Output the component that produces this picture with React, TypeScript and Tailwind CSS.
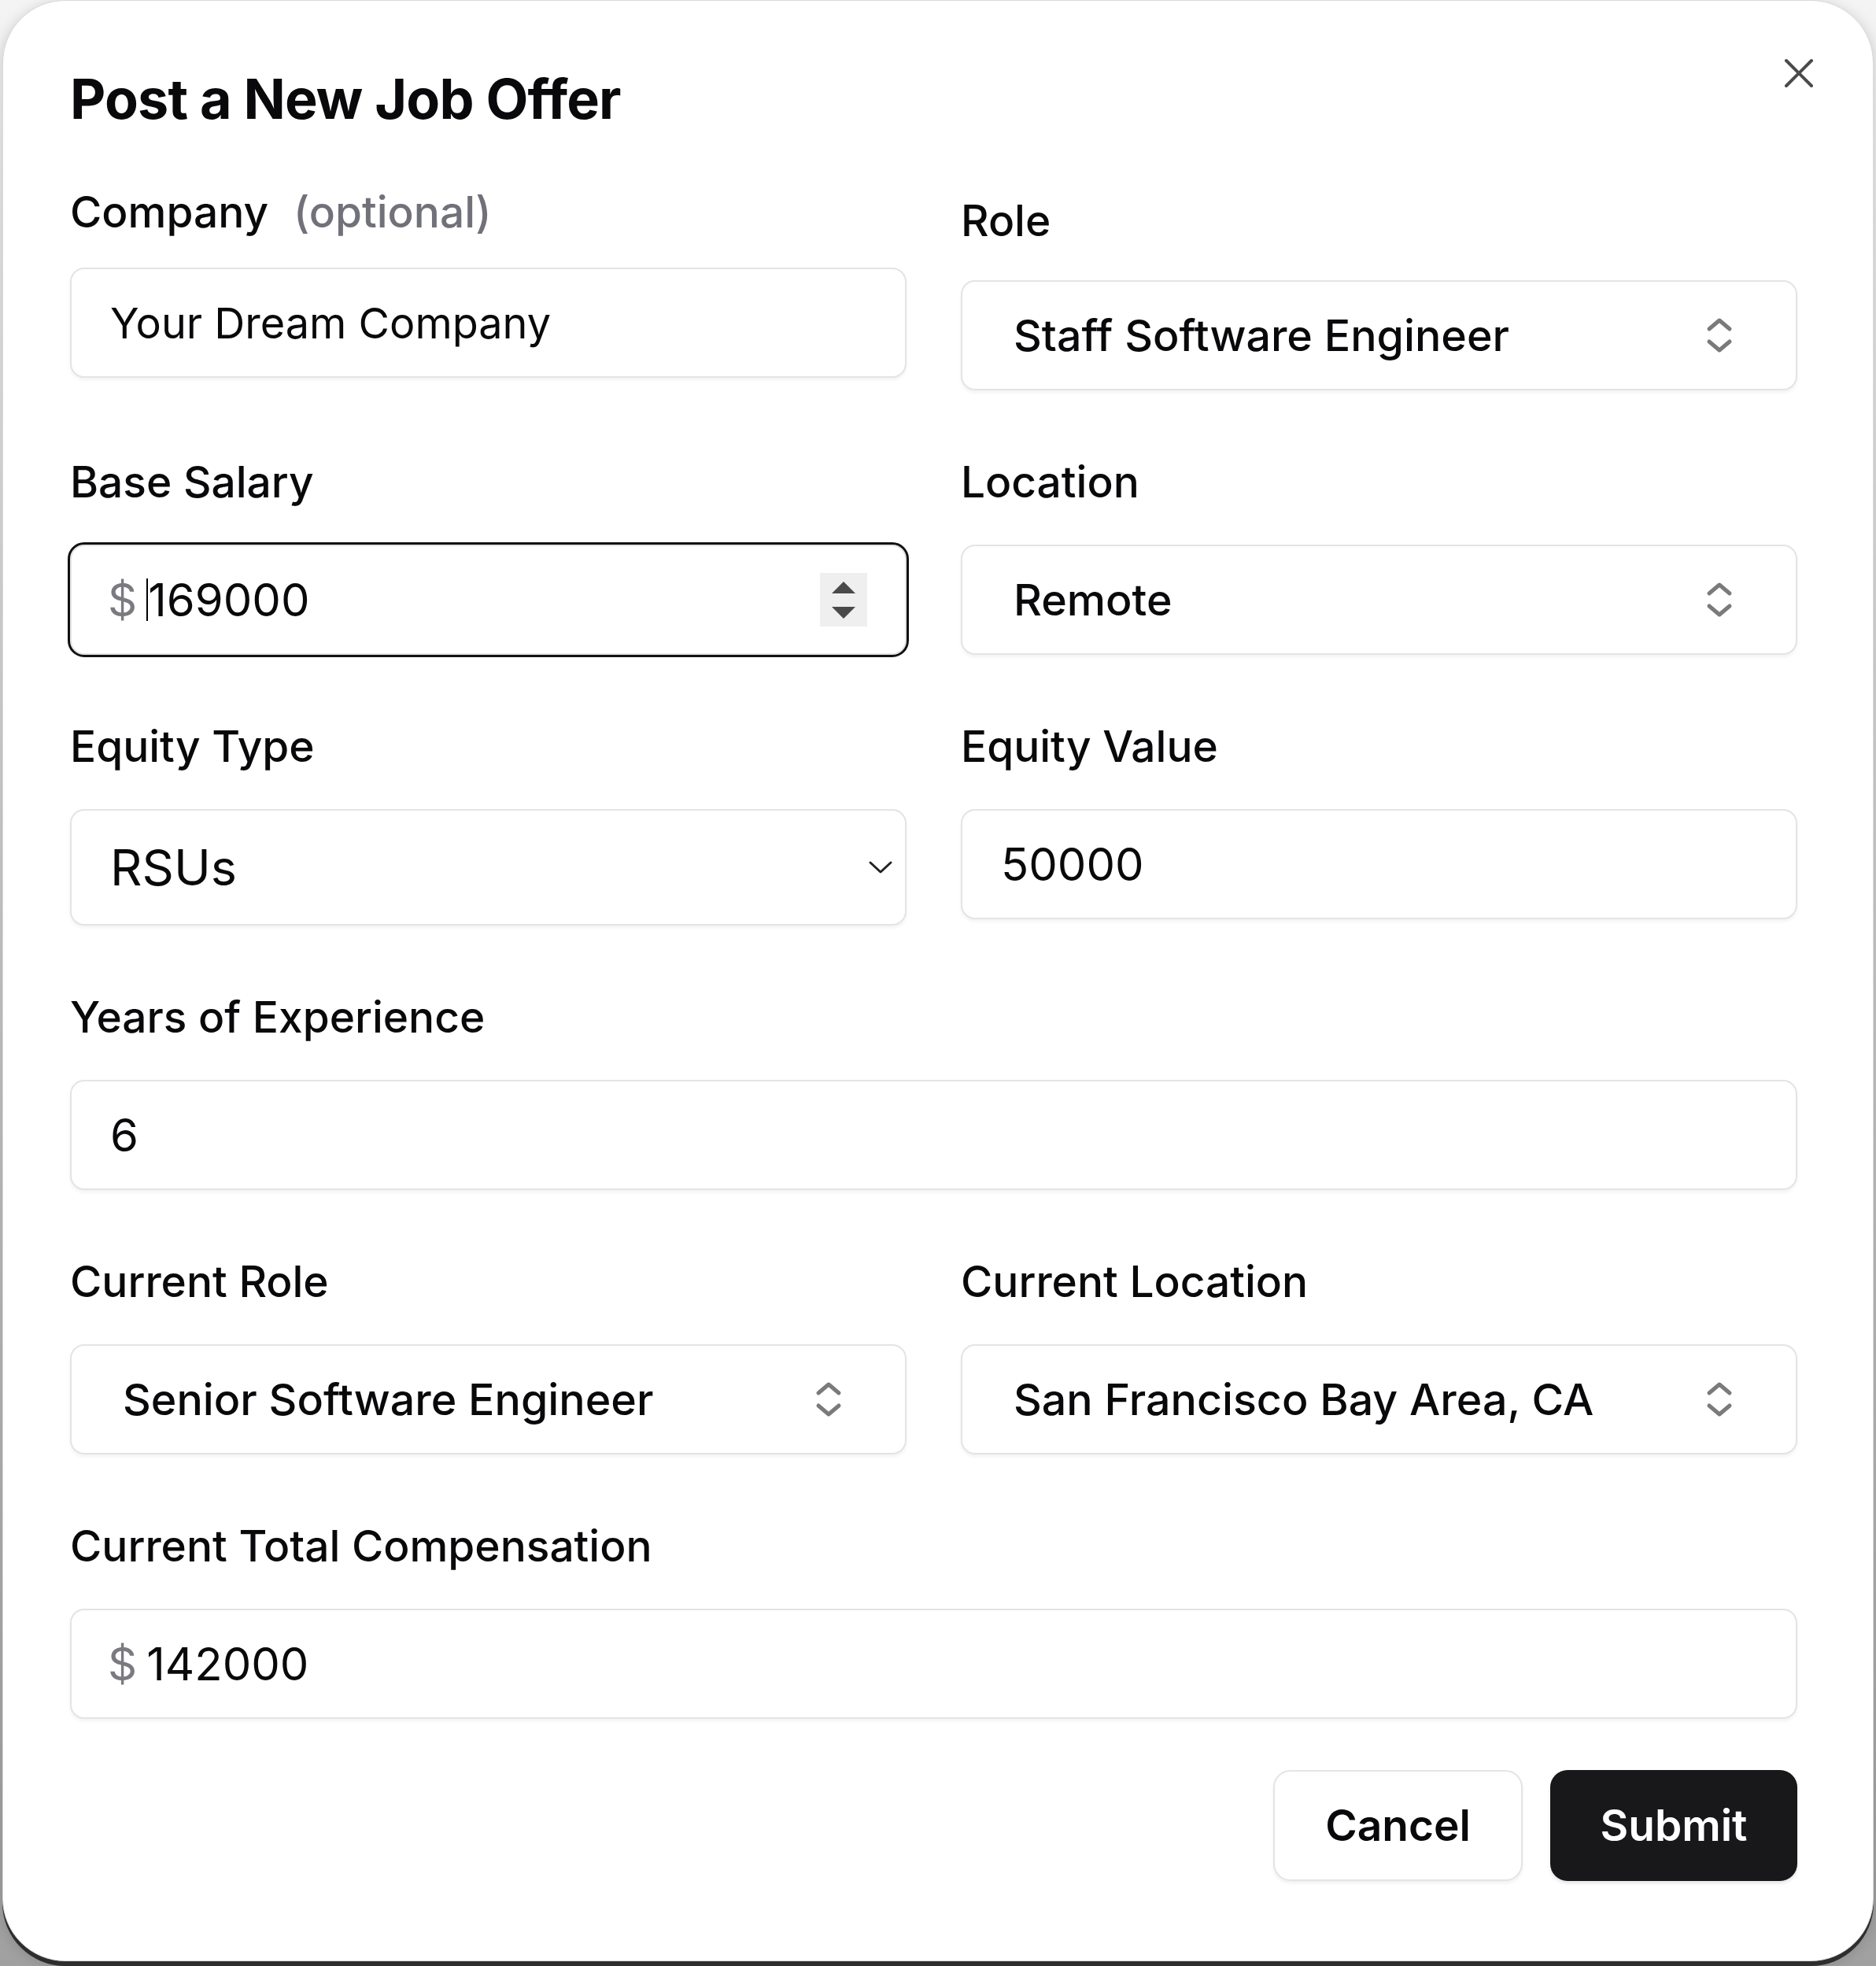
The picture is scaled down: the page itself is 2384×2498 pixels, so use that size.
import type { ReactNode } from "react";

// up/down carets used by the combobox-style pickers
const UpDown = () => (
  <svg width="36" height="54" viewBox="0 0 36 54" fill="none" stroke="#7a7a7a" strokeWidth="5" strokeLinecap="round" strokeLinejoin="round">
    <path d="M5 19 18 8 31 19" />
    <path d="M5 35 18 46 31 35" />
  </svg>
);

const Field = ({ label, className, gap, children }: { label: ReactNode; className?: string; gap: string; children: ReactNode }) => (
  <div className={`flex flex-col ${gap} ${className ?? ""}`}>
    <label className="text-[55px] leading-[64px] font-medium text-[#09090b]">{label}</label>
    {children}
  </div>
);

const box = "flex h-[140px] items-center rounded-[18px] border-2 border-[#e4e4e7] bg-white shadow-[0_3px_4px_rgba(0,0,0,0.05)]";

const Picker = ({ value }: { value: string }) => (
  <div className={`${box} justify-between pl-[65px] pr-[79px] text-[55.5px] font-medium text-[#09090b]`}>
    <span>{value}</span>
    <UpDown />
  </div>
);

const TextBox = ({ value, size = "text-[58px]" }: { value: string; size?: string }) => (
  <div className={`${box} pl-[49px] ${size} text-[#09090b]`}>{value}</div>
);

const Money = ({ value, focused }: { value: string; focused?: boolean }) => (
  <div className={`${box} pl-[46px] text-[58px] text-[#09090b] ${focused ? "border-[#111] outline-[3px] outline-[#111]" : ""}`}>
    <span className="mr-[12px] text-[#7a7a80]">$</span>
    {focused && <span className="h-[54px] w-[2px] bg-black" />}
    <span>{value}</span>
    {focused && (
      <div className="ml-auto mr-[48px] flex h-[68px] w-[60px] flex-col items-center justify-center gap-[17px] bg-[#efefef]">
        <svg width="30" height="15" viewBox="0 0 30 15"><path d="M15 0 30 15H0Z" fill="#4a4a4a" /></svg>
        <svg width="30" height="15" viewBox="0 0 30 15"><path d="M0 0h30L15 15Z" fill="#4a4a4a" /></svg>
      </div>
    )}
  </div>
);

export default function App() {
  return (
    <div className="h-[2498px] w-[2384px] bg-linear-to-b from-[#f4f4f4] to-[#a0a0a0] font-['Inter',sans-serif]">
      <div className="relative ml-[3px] h-[2492px] w-[2378px] rounded-[80px] border border-[#dadada] bg-white pl-[85px] pr-[96px] pt-[83px] shadow-[0_6px_0_#2e2e2e,0_4px_18px_rgba(0,0,0,0.18)]">
        <button className="absolute right-[74px] top-[72px]">
          <svg width="40" height="40" viewBox="0 0 40 40" stroke="#4b4b4b" strokeWidth="4" strokeLinecap="round">
            <path d="M4 4 36 36M36 4 4 36" />
          </svg>
        </button>

        <h2 className="mb-[69px] text-[70px] leading-[84px] font-bold tracking-[-0.012em] text-[#09090b]">Post a New Job Offer</h2>

        <div className="grid grid-cols-2 items-start gap-x-[69px] gap-y-[84px]">
          <Field gap="gap-[39px]" label={<>Company<span className="ml-[32px] text-[#71717a]">(optional)</span></>}>
            <TextBox value="Your Dream Company" size="text-[54px]" />
          </Field>
          <Field gap="gap-[44px]" className="mt-[11px]" label="Role">
            <Picker value="Staff Software Engineer" />
          </Field>

          <Field gap="gap-[48px]" label="Base Salary">
            <Money value="169000" focused />
          </Field>
          <Field gap="gap-[48px]" label="Location">
            <Picker value="Remote" />
          </Field>

          <Field gap="gap-[48px]" label="Equity Type">
            <div className={`${box} h-[148px] justify-between pl-[49px] pr-[15px] text-[63px] text-[#09090b]`}>
              <span>RSUs</span>
              <svg width="32" height="18" viewBox="0 0 32 18" fill="none" stroke="#222" strokeWidth="3" strokeLinecap="round" strokeLinejoin="round">
                <path d="M3 3 16 15 29 3" />
              </svg>
            </div>
          </Field>
          <Field gap="gap-[48px]" label="Equity Value">
            <TextBox value="50000" />
          </Field>

          <Field gap="gap-[48px]" className="col-span-2" label="Years of Experience">
            <TextBox value="6" />
          </Field>

          <Field gap="gap-[48px]" label="Current Role">
            <Picker value="Senior Software Engineer" />
          </Field>
          <Field gap="gap-[48px]" label="Current Location">
            <Picker value="San Francisco Bay Area, CA" />
          </Field>

          <Field gap="gap-[48px]" className="col-span-2" label="Current Total Compensation">
            <Money value="142000" />
          </Field>
        </div>

        <div className="mt-[65px] flex justify-end gap-[35px]">
          <button className="h-[141px] w-[317px] rounded-[22px] border-2 border-[#e4e4e7] bg-white text-[55px] font-semibold text-[#09090b] shadow-[0_3px_4px_rgba(0,0,0,0.06)]">
            Cancel
          </button>
          <button className="h-[141px] w-[314px] rounded-[22px] bg-[#18181b] text-[55px] font-semibold text-white shadow-[0_3px_4px_rgba(0,0,0,0.1)]">
            Submit
          </button>
        </div>
      </div>
    </div>
  );
}
